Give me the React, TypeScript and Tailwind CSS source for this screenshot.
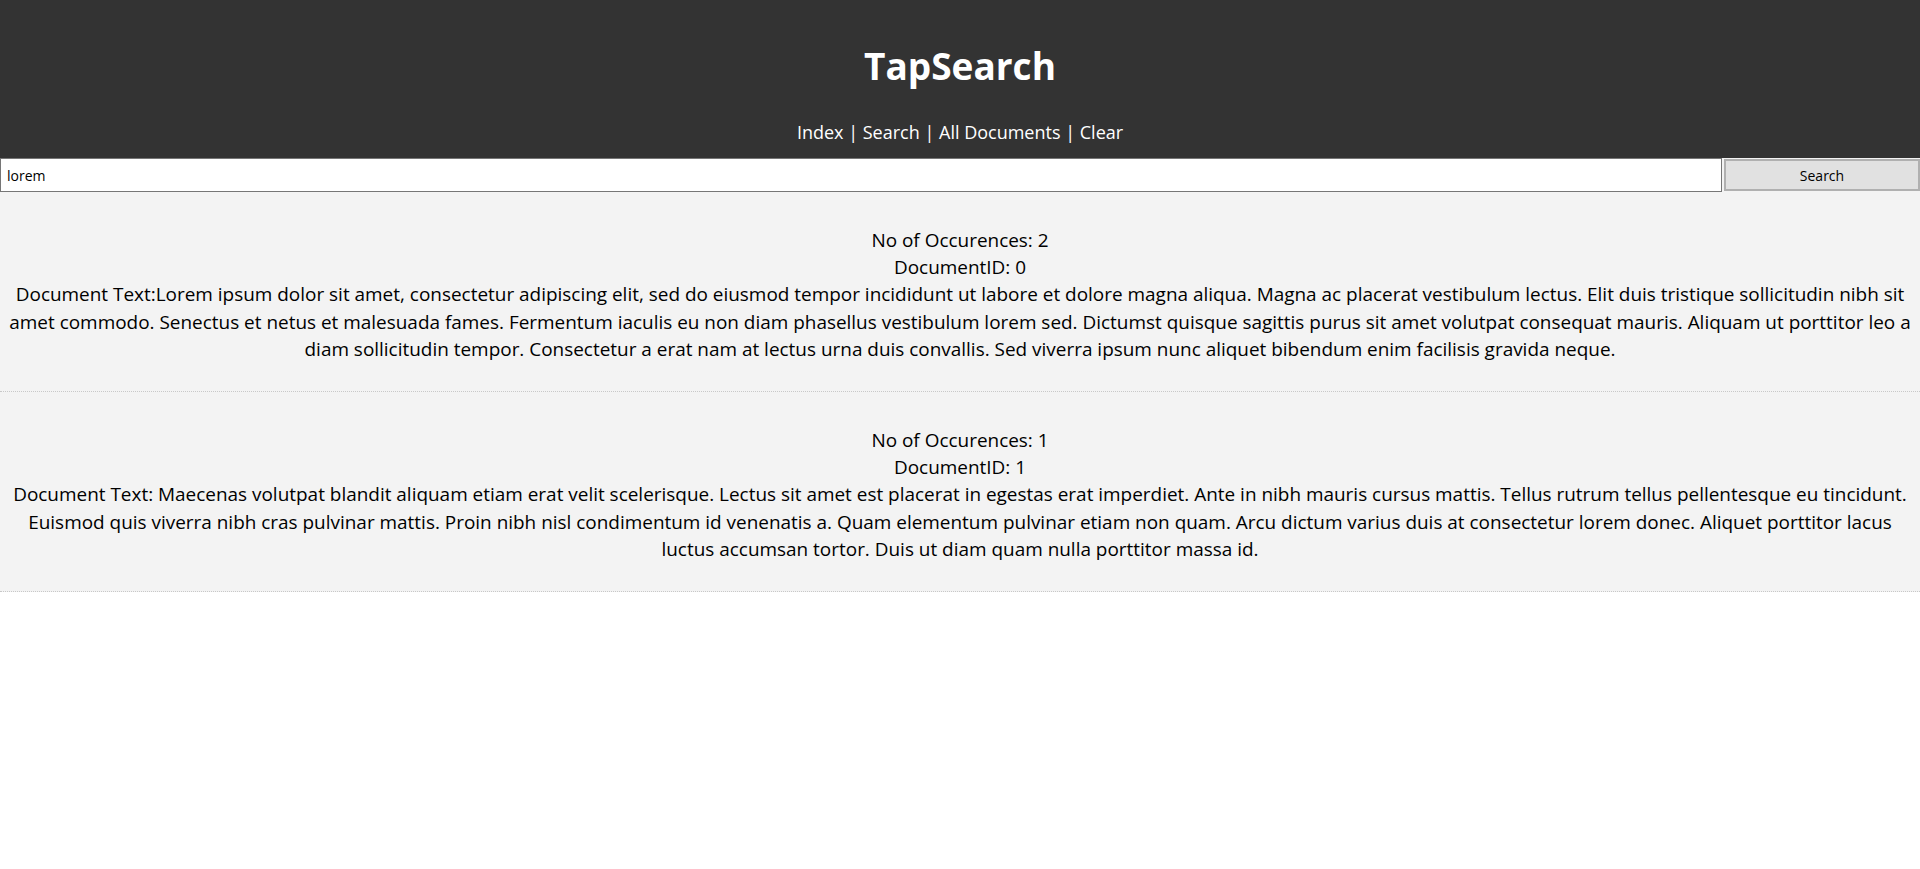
const results = [
  {
    count: 2,
    id: 0,
    text: "Document Text:Lorem ipsum dolor sit amet, consectetur adipiscing elit, sed do eiusmod tempor incididunt ut labore et dolore magna aliqua. Magna ac placerat vestibulum lectus. Elit duis tristique sollicitudin nibh sit amet commodo. Senectus et netus et malesuada fames. Fermentum iaculis eu non diam phasellus vestibulum lorem sed. Dictumst quisque sagittis purus sit amet volutpat consequat mauris. Aliquam ut porttitor leo a diam sollicitudin tempor. Consectetur a erat nam at lectus urna duis convallis. Sed viverra ipsum nunc aliquet bibendum enim facilisis gravida neque.",
  },
  {
    count: 1,
    id: 1,
    text: "Document Text: Maecenas volutpat blandit aliquam etiam erat velit scelerisque. Lectus sit amet est placerat in egestas erat imperdiet. Ante in nibh mauris cursus mattis. Tellus rutrum tellus pellentesque eu tincidunt. Euismod quis viverra nibh cras pulvinar mattis. Proin nibh nisl condimentum id venenatis a. Quam elementum pulvinar etiam non quam. Arcu dictum varius duis at consectetur lorem donec. Aliquet porttitor lacus luctus accumsan tortor. Duis ut diam quam nulla porttitor massa id.",
  },
];

function App() {
  return (
    <div className="min-h-[869px] bg-white font-['Open_Sans',sans-serif] text-black">
      <header className="h-[158px] bg-[#333333] text-white flex flex-col items-center">
        <h1 className="mt-[41px] text-[37px] leading-[50px] font-bold">TapSearch</h1>
        <nav className="mt-[28px] text-[18px] leading-[26px]">
          <a>Index</a> | <a>Search</a> | <a>All Documents</a> | <a>Clear</a>
        </nav>
      </header>

      <div className="flex gap-[2px] h-[34px] bg-[#f3f3f3]">
        <input
          defaultValue="lorem"
          className="flex-1 h-[34px] border border-[#767676] bg-white px-[6px] text-[14px] font-['Open_Sans',sans-serif] outline-none"
        />
        <button className="w-[196px] h-[32px] mt-[1px] border-2 border-[#b0b0b0] bg-[#e1e1e1] text-[14px] font-['Open_Sans',sans-serif]">
          Search
        </button>
      </div>

      <div>
        {results.map((r) => (
          <div
            key={r.id}
            className="h-[200px] bg-[#f3f3f3] border-b border-dotted border-[#c8c8c8] pt-[35px] px-[8px] text-center text-[18.95px] leading-[27.2px]"
          >
            <p>No of Occurences: {r.count}</p>
            <p>DocumentID: {r.id}</p>
            <p>{r.text}</p>
          </div>
        ))}
      </div>
    </div>
  );
}

export default App;
